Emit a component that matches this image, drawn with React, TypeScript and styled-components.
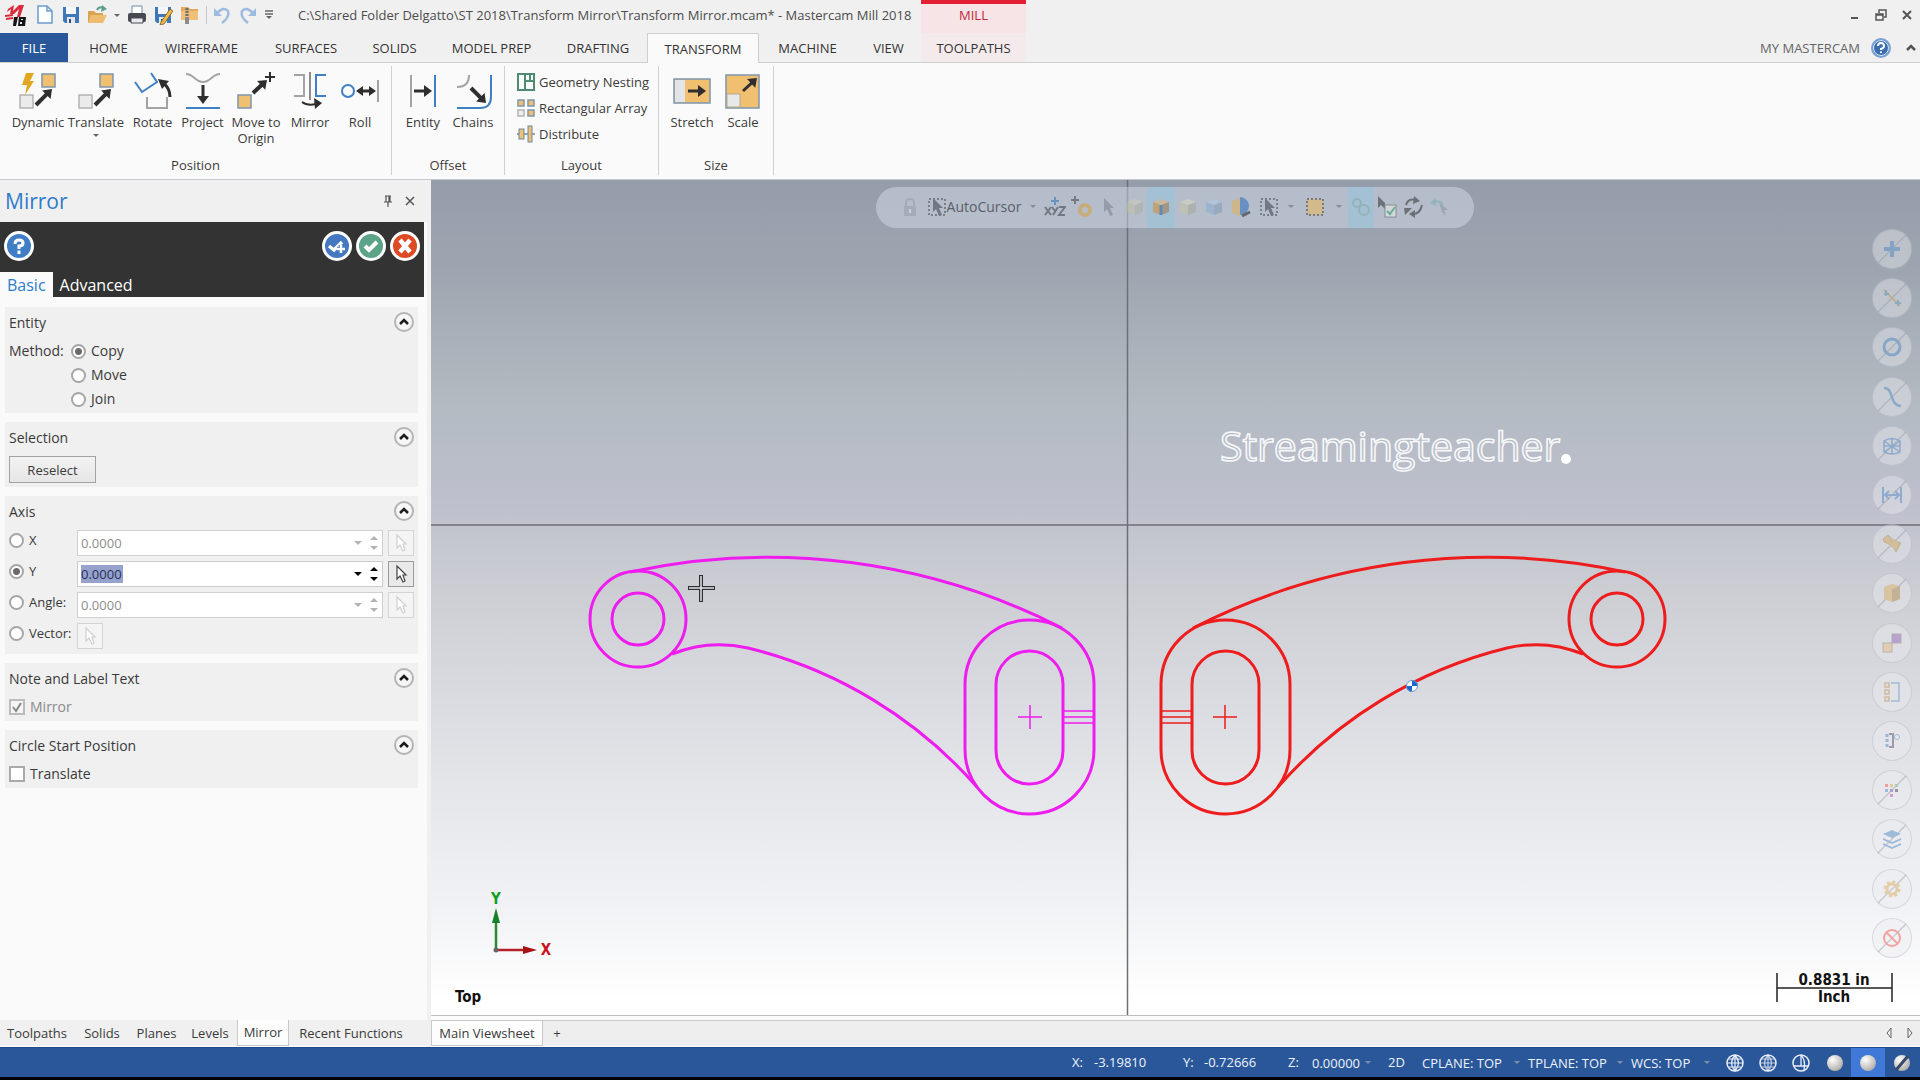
import React, { useState } from "react";
import styled, { createGlobalStyle, css } from "styled-components";

const blue = "#3f7fc4";
const grey = "#a3a3a3";
const orange = "#f0bf70";
const dark = "#2e2e2e";
const statusBlue = "#2a579a";

const GlobalStyle = createGlobalStyle`
  *, *::before, *::after { box-sizing: border-box; }
  body {
    margin: 0;
    background: #000;
    color: #3a3a3a;
    font: 14px/18px "Open Sans", "Noto Sans", sans-serif;
  }
  button, input { font: inherit; color: inherit; margin: 0; }
  svg { display: block; flex: none; }
`;

const Window = styled.div`
  height: 100vh;
  display: flex;
  flex-direction: column;
  background: #f0f0f0;
  border-bottom: 3px solid #000;
  overflow: hidden;
`;

const plainButton = css`
  border: 0;
  padding: 0;
  background: none;
  display: flex;
  align-items: center;
  justify-content: center;
`;

/* ---------- title bar ---------- */
const TitleBar = styled.header`
  height: 33px;
  flex: none;
  display: flex;
  align-items: flex-start;
`;
const QuickButton = styled.button<{ $w: number }>`
  ${plainButton}
  width: ${(p) => p.$w}px;
  height: 30px;
`;
const QuickDivider = styled.span`
  width: 1px;
  height: 18px;
  margin: 6px 2px 0 4px;
  background: #c8c8c8;
`;
const WindowTitle = styled.h1`
  margin: 0;
  width: 645px;
  padding-left: 22px;
  font-size: 13px;
  font-weight: 400;
  line-height: 30px;
  color: #4c4c4c;
  white-space: nowrap;
`;
const MillLabel = styled.div`
  width: 105px;
  height: 33px;
  border-top: 4px solid #e21f35;
  background: #f6e4e7;
  color: #c0293b;
  font-size: 13px;
  line-height: 22px;
  text-align: center;
`;
const WindowButtons = styled.div`
  margin-left: auto;
  display: flex;
`;

/* ---------- tabs ---------- */
const TabBar = styled.nav`
  height: 30px;
  flex: none;
  display: flex;
  border-bottom: 1px solid #cfcfcf;
`;
const Tab = styled.button<{ $w: number; $kind?: "file" | "active" | "mill" }>`
  ${plainButton}
  width: ${(p) => p.$w}px;
  height: 30px;
  font-size: 13px;
  color: #333;
  ${(p) => p.$kind === "file" && css`background: ${statusBlue}; color: #fff; margin-right: 3px; height: 29px;`}
  ${(p) => p.$kind === "active" && css`background: #fafafa; border: 1px solid #cfcfcf; border-bottom: 0;`}
  ${(p) => p.$kind === "mill" && css`background: #f4eaec; height: 29px;`}
`;
const TabBarEnd = styled.div`
  margin-left: auto;
  display: flex;
  align-items: center;
  font-size: 13px;
  color: #666;
`;

/* ---------- ribbon ---------- */
const Ribbon = styled.section`
  height: 117px;
  flex: none;
  display: flex;
  background: #fafafa;
  border-bottom: 1px solid #c4c7cb;
`;
const Group = styled.div<{ $w: number }>`
  width: ${(p) => p.$w}px;
  margin: 3px 0 4px;
  padding: 4px 0 1px;
  border-right: 1px solid #d0d0d0;
  display: flex;
  flex-direction: column;
  justify-content: space-between;
`;
const GroupBody = styled.div<{ $pad: number }>`
  display: flex;
  padding-left: ${(p) => p.$pad}px;
`;
const GroupName = styled.div`
  text-align: center;
  font-size: 13px;
`;
const RibbonButton = styled.button<{ $w: number }>`
  ${plainButton}
  width: ${(p) => p.$w}px;
  flex-direction: column;
  justify-content: flex-start;
  font-size: 13px;
  line-height: 16px;
  gap: 4px;
`;
const LayoutList = styled.div`
  display: flex;
  flex-direction: column;
`;
const LayoutButton = styled.button`
  ${plainButton}
  justify-content: flex-start;
  height: 26px;
  padding-bottom: 3px;
  gap: 4px;
  font-size: 13px;
  white-space: nowrap;
`;

/* ---------- work area ---------- */
const Work = styled.main`
  flex: 1;
  min-height: 0;
  display: flex;
`;
const SideColumn = styled.aside`
  width: 431px;
  flex: none;
  display: flex;
  flex-direction: column;
  border-right: 4px solid #f0f0f0;
  background: #fafafa;
`;
const PanelTitle = styled.div`
  height: 42px;
  flex: none;
  padding: 0 6px 0 5px;
  display: flex;
  align-items: center;
  background: #f0f0f0;
`;
const PanelName = styled.h2`
  margin: 0 auto 0 0;
  font-size: 21px;
  font-weight: 400;
  line-height: 38px;
  color: #2f7bcb;
`;
const TitleButton = styled.button`
  ${plainButton}
  width: 22px;
  height: 22px;
`;
const PanelHead = styled.div`
  width: 424px;
  height: 75px;
  flex: none;
  background: #333;
  display: flex;
  flex-direction: column;
  justify-content: space-between;
`;
const HeadActions = styled.div`
  display: flex;
  gap: 4px;
  padding: 9px 4px 0;
`;
const RoundButton = styled.button<{ $bg: string; $push?: boolean }>`
  ${plainButton}
  width: 30px;
  height: 30px;
  border: 3px solid #fff;
  border-radius: 50%;
  background: ${(p) => p.$bg};
  color: #fff;
  ${(p) => p.$push && css`margin-right: auto;`}
`;
const HeadTabs = styled.div`
  display: flex;
`;
const HeadTab = styled.button<{ $active?: boolean }>`
  ${plainButton}
  height: 25px;
  padding: 0 7px;
  font-size: 16px;
  color: ${(p) => (p.$active ? "#2f7bcb" : "#fff")};
  background: ${(p) => (p.$active ? "#fafafa" : "none")};
`;
const Sections = styled.div`
  flex: 1;
  padding: 10px 9px 0 5px;
  display: flex;
  flex-direction: column;
  gap: 9px;
`;
const SectionBox = styled.section`
  background: #f0f0f0;
  padding: 0 4px 2px;
  display: flex;
  flex-direction: column;
`;
const SectionHead = styled.div`
  height: 29px;
  margin-bottom: 3px;
  display: flex;
  align-items: center;
  justify-content: space-between;
`;
const SectionName = styled.h3`
  margin: 0;
  padding-top: 2px;
  font-size: 14px;
  font-weight: 400;
`;
const Collapse = styled.button`
  ${plainButton}
  width: 20px;
  height: 20px;
  border: 2px solid #b4b4b4;
  border-radius: 50%;
  background: #f6f6f6;
`;
const MethodRow = styled.div`
  display: flex;
`;
const MethodName = styled.span`
  width: 62px;
  line-height: 24px;
`;
const Option = styled.label<{ $muted?: boolean }>`
  display: flex;
  align-items: center;
  gap: 5px;
  height: 24px;
  color: ${(p) => (p.$muted ? "#8a8a8a" : "inherit")};
`;
const Radio = styled.input.attrs({ type: "radio" })`
  appearance: none;
  width: 15px;
  height: 15px;
  flex: none;
  border: 2px solid #a6a6a6;
  border-radius: 50%;
  background: #fff;
  &:checked { background: radial-gradient(circle, #6a6a6a 0 3px, #fff 4px); }
`;
const CheckBox = styled.span`
  width: 16px;
  height: 16px;
  display: grid;
  > * { grid-area: 1 / 1; }
  > svg { display: none; pointer-events: none; }
  > input:checked + svg { display: block; }
`;
const CheckInput = styled.input.attrs({ type: "checkbox" })`
  appearance: none;
  width: 16px;
  height: 16px;
  border: 2px solid #aaa;
  background: #fff;
  &:disabled { background: #f4f4f4; border-color: #bbb; }
`;
const Reselect = styled.button`
  ${plainButton}
  width: 87px;
  height: 27px;
  margin: 2px 0;
  border: 1px solid #a3a3a3;
  background: linear-gradient(#f2f2f2, #e6e6e6);
  font-size: 13px;
`;
const AxisRows = styled.div`
  padding: 2px 0 3px;
  display: flex;
  flex-direction: column;
  gap: 5px;
`;
const AxisRow = styled.div`
  display: flex;
  height: 26px;
  gap: 5px;
`;
const AxisOption = styled(Option)`
  width: 63px;
  height: 20px;
  font-size: 13px;
`;
const Combo = styled.div<{ $off: boolean }>`
  flex: 1;
  display: flex;
  align-items: center;
  border: 1px solid ${(p) => (p.$off ? "#d2d0ce" : "#cccccc")};
  background: #fff;
  color: ${(p) => (p.$off ? "#b4b4b4" : "#000")};
`;
const Value = styled.input<{ $off: boolean }>`
  flex: 1;
  min-width: 0;
  border: 0;
  padding: 0 3px;
  background: none;
  color: ${(p) => (p.$off ? "#8d8d8d" : "#27315e")};
  ${(p) => !p.$off && css`
    background: linear-gradient(#96a2cb, #96a2cb) 3px 50% / 42px 19px no-repeat;
  `}
  outline: 0;
  font-size: 13px;
`;
const ComboButton = styled.button`
  ${plainButton}
  width: 16px;
  height: 22px;
`;
const PickButton = styled.button<{ $off: boolean }>`
  ${plainButton}
  width: 26px;
  height: 26px;
  border: 1px solid ${(p) => (p.$off ? "#d4d4d4" : "#9b9b9b")};
  color: ${(p) => (p.$off ? "#cfcfcf" : "#444")};
  background: ${(p) => (p.$off ? "#f4f4f4" : "#e9e9e9")};
`;
const SheetTabs = styled.nav`
  height: 27px;
  flex: none;
  display: flex;
  background: #f0f0f0;
  border-bottom: 1px solid #fff;
`;
const SheetTab = styled.button<{ $w: number; $active?: boolean }>`
  ${plainButton}
  width: ${(p) => p.$w}px;
  padding-bottom: 1px;
  font-size: 13px;
  white-space: nowrap;
  ${(p) => p.$active && css`background: #fdfdfd; border: solid #c8c8c8; border-width: 0 1px 1px;`}
`;
const ViewColumn = styled.div`
  flex: 1;
  min-width: 0;
  display: flex;
  flex-direction: column;
`;
const Viewport = styled.div`
  flex: 1;
  min-height: 0;
  position: relative;
  background: linear-gradient(#959dab 0%, #9ca5af 10%, #b3bac2 27%, #bfc1ce 40%, #c5c8cf 44%, #d2d3d8 54%, #dadbe1 62%, #e6e7ea 74%, #f0f1f4 86%, #fff 98%);
`;
const Drawing = styled.svg`
  width: 100%;
  height: 100%;
`;
const ViewSheets = styled.nav`
  height: 32px;
  flex: none;
  padding-top: 5px;
  display: flex;
  align-items: stretch;
  border-top: 1px solid #bdbdbd;
  border-bottom: 1px solid #fff;
  background: linear-gradient(#fbfbfb 4px, #c8c8c8 4px 5px, #eeeeee 5px);
`;
const SheetArrows = styled.div`
  margin-left: auto;
  display: flex;
`;
const Cursorbar = styled.div`
  position: absolute;
  top: 7px;
  left: 445px;
  height: 41px;
  padding: 0 21px;
  display: flex;
  border-radius: 21px;
  background: rgba(225, 231, 245, 0.42);
`;
const CursorTool = styled.button<{ $w: number; $on?: boolean }>`
  ${plainButton}
  width: ${(p) => p.$w}px;
  padding-bottom: 2px;
  font-size: 14px;
  color: #5b6068;
  white-space: nowrap;
  background: ${(p) => (p.$on ? "rgba(150, 195, 220, 0.55)" : "none")};
  > svg { opacity: 0.55; }
`;
const Filters = styled.div`
  position: absolute;
  top: 49px;
  right: 8px;
  bottom: 57px;
  display: flex;
  flex-direction: column;
  justify-content: space-between;
`;
const FilterButton = styled.button`
  ${plainButton}
  width: 40px;
  height: 40px;
  border: 1px solid rgba(130, 140, 155, 0.24);
  border-radius: 50%;
  background: rgba(235, 237, 240, 0.42);
  > svg { opacity: 0.42; }
`;

/* ---------- status bar ---------- */
const StatusBar = styled.footer`
  height: 30px;
  flex: none;
  display: flex;
  justify-content: flex-end;
  align-items: stretch;
  background: ${statusBlue};
  border-top: 1px solid #1f4a89;
  color: #eef3fa;
  padding-right: 1px;
`;
const StatusText = styled.span<{ $w: number }>`
  width: ${(p) => p.$w}px;
  font-size: 13px;
  line-height: 28px;
  white-space: nowrap;
`;
const StatusButton = styled.button<{ $w: number; $on?: boolean }>`
  ${plainButton}
  width: ${(p) => p.$w}px;
  font-size: 13px;
  justify-content: ${(p) => (p.$w > 40 ? "space-between" : "center")};
  padding-right: ${(p) => (p.$w > 40 ? 8 : 0)}px;
  white-space: nowrap;
  background: ${(p) => (p.$on ? "#3f78d6" : "none")};
`;

/* ---------- icons ---------- */
type Kids = { children: React.ReactNode };
const I = ({ s = 20, b = s, children }: { s?: number; b?: number } & Kids) => (
  <svg width={s} height={s} viewBox={`0 0 ${b} ${b}`} fill="none" aria-hidden="true">{children}</svg>
);

const Caret = ({ c = "#666", s = 8 }: { c?: string; s?: number }) => (
  <svg width={s} height={s / 2} viewBox="0 0 8 4" aria-hidden="true">
    <path d="M0 0H8L4 4Z" fill={c} />
  </svg>
);

const Arrow = ({ x1, y1, x2, y2, w = 4 }: { x1: number; y1: number; x2: number; y2: number; w?: number }) => {
  const len = Math.hypot(x2 - x1, y2 - y1);
  const ux = (x2 - x1) / len;
  const uy = (y2 - y1) / len;
  const bx = x2 - ux * 8;
  const by = y2 - uy * 8;
  return (
    <>
      <path d={`M${x1} ${y1}L${bx + ux} ${by + uy}`} stroke={dark} strokeWidth={w} />
      <path d={`M${x2} ${y2}L${bx - uy * 6} ${by + ux * 6}L${bx + uy * 6} ${by - ux * 6}Z`} fill={dark} />
    </>
  );
};
const Box = ({ x, y, fill = orange, stroke = "#7d96ad", s = 13 }: { x: number; y: number; fill?: string; stroke?: string; s?: number }) => (
  <rect x={x} y={y} width={s} height={s} fill={fill} stroke={stroke} strokeWidth="1.5" />
);
const Ghost = ({ x, y }: { x: number; y: number }) => <Box x={x} y={y} fill="#ebebeb" stroke="#b4b4b4" />;

const DynamicIcon = () => (
  <I s={40}>
    <path d="M8 3H16L12 11H16L7 25L9 15H4Z" fill="#e2a722" />
    <Box x={24} y={4} /><Ghost x={2} y={25} />
    <Arrow x1={18} y1={35} x2={34} y2={19} />
  </I>
);
const TranslateIcon = () => (
  <I s={40}><Box x={24} y={4} /><Ghost x={3} y={25} /><Arrow x1={19} y1={35} x2={35} y2={19} /></I>
);
const RotateIcon = () => (
  <I s={40}>
    <path d="M2 12L9 22L24 12L18 3" stroke={blue} strokeWidth="2" />
    <path d="M14 27V38H34V27" stroke={grey} strokeWidth="2" />
    <path d="M37 27Q37 18 30 13" stroke={dark} strokeWidth="3" />
    <path d="M25 9L36 11L29 19Z" fill={dark} />
  </I>
);
const ProjectIcon = () => (
  <I s={40}>
    <path d="M3 4C11 4 12 12 20 12S29 4 37 4" stroke={grey} strokeWidth="2" />
    <Arrow x1={20} y1={15} x2={20} y2={34} w={3} />
    <path d="M3 38H37" stroke={blue} strokeWidth="2" />
  </I>
);
const OriginIcon = () => (
  <I s={40}>
    <Box x={2} y={25} /><Arrow x1={17} y1={23} x2={31} y2={10} />
    <path d="M34 2V12M29 7H39" stroke={dark} strokeWidth="2" />
  </I>
);
const MirrorIcon = () => (
  <I s={40}>
    <path d="M4 5H14V26H4" stroke={grey} strokeWidth="2" />
    <path d="M20 2V30" stroke="#8c8c8c" strokeWidth="2" />
    <path d="M36 5H26V26H36" stroke={blue} strokeWidth="2" />
    <path d="M12 32Q17 36 26 34" stroke={dark} strokeWidth="2" />
    <path d="M24 28L32 33L25 39Z" fill={dark} />
  </I>
);
const RollIcon = () => (
  <I s={40}>
    <circle cx="8" cy="21" r="6" stroke={blue} strokeWidth="2" />
    <path d="M20 21H32" stroke={dark} strokeWidth="3" />
    <path d="M16 21L23 16V26ZM36 21L29 16V26Z" fill={dark} />
    <path d="M38 10V32" stroke={grey} strokeWidth="2" />
  </I>
);
const EntityIcon = () => (
  <I s={40}>
    <path d="M8 5V37" stroke={grey} strokeWidth="2" />
    <Arrow x1={11} y1={21} x2={29} y2={21} w={3} />
    <path d="M32 5V37" stroke={blue} strokeWidth="2" />
  </I>
);
const ChainsIcon = () => (
  <I s={40}>
    <path d="M4 17Q16 17 16 5" stroke={grey} strokeWidth="2" />
    <Arrow x1={18} y1={18} x2={33} y2={33} />
    <path d="M4 38H27Q38 38 38 27V5" stroke={blue} strokeWidth="2" />
  </I>
);
const StretchIcon = () => (
  <I s={40}>
    <rect x="2" y="9" width="36" height="24" fill={orange} stroke="#7d96ad" strokeWidth="1.5" />
    <path d="M3 10H13V32H3Z" fill="#e2e4e8" />
    <Arrow x1={16} y1={21} x2={34} y2={21} w={3} />
  </I>
);
const ScaleIcon = () => (
  <I s={40}>
    <rect x="3" y="5" width="33" height="33" fill={orange} stroke="#7d96ad" strokeWidth="1.5" />
    <path d="M4 24H17V37H4Z" fill="#e6e8ea" stroke="#b8a98c" />
    <Arrow x1={20} y1={21} x2={34} y2={8} w={3} />
  </I>
);
const NestingIcon = () => (
  <I s={18}><path d="M1 1H17V17H1ZM8 1V17M8 8H17M13 1V8" stroke="#4d8b72" strokeWidth="2" /></I>
);
const ArrayIcon = () => (
  <I s={18}><Box x={1} y={1} s={6} /><Box x={11} y={1} s={6} /><Box x={1} y={11} s={6} fill="#eee" stroke="#b4b4b4" /><Box x={11} y={11} s={6} /></I>
);
const DistributeIcon = () => (
  <I s={18}>
    <path d="M0 9H18" stroke="#6b88a5" strokeWidth="1.5" />
    <rect x="2" y="4" width="5" height="10" fill={orange} stroke="#6b88a5" />
    <rect x="11" y="1" width="4" height="16" fill={orange} stroke="#6b88a5" />
  </I>
);
const LogoIcon = () => (
  <I s={22}>
    <path d="M3 5L9 1L8 7L14 1L19 1L15 13L12 13L14 5L9 10L5 10L6 5L2 8Z" fill="#d92b3c" />
    <path d="M0 12L8 11M1 15L8 14" stroke="#d92b3c" strokeWidth="2" />
    <path d="M9 13H13L11 22H8ZM14 13H21L20 22H13ZM16 15V16H18V15ZM15 18V20H17V18Z" fill="#141414" fillRule="evenodd" />
  </I>
);
const PageIcon = () => (
  <I s={20}><path d="M3 1H12L17 6V18H3Z" fill="#fff" stroke="#6b9bd1" strokeWidth="1.5" /><path d="M12 1V6H17" stroke="#6b9bd1" strokeWidth="1.5" /></I>
);
const Floppy = ({ pen = false }: { pen?: boolean }) => (
  <I s={20}>
    <path d="M2 2H18V18H4L2 16Z" fill="#3f78b8" />
    <path d="M5 2H15V9H5Z" fill="#f5f7fa" /><path d="M6 12H14V18H6Z" fill="#dfe6ee" /><path d="M8 14H10V18H8Z" fill="#35506e" />
    {pen && <><path d="M8 17L17 4L20 6L11 19L7 20Z" fill="#f0b846" stroke="#7b5c1f" strokeWidth="0.8" /></>}
  </I>
);
const OpenIcon = () => (
  <I s={20}>
    <path d="M1 6H7L9 8H16V18H1Z" fill="#d9a354" /><path d="M4 10H20L16 18H1Z" fill="#eebd72" />
    <path d="M10 5Q12 1 17 3" stroke="#5fa08a" strokeWidth="2" /><path d="M15 0L20 4L14 7Z" fill="#5fa08a" />
  </I>
);
const PrintIcon = () => (
  <I s={20}>
    <path d="M5 1H15V9H5Z" fill="#fff" stroke="#6c8caf" /><rect x="1" y="8" width="18" height="9" rx="2" fill="#474a50" />
    <path d="M4 13H16V18H4Z" fill="#e8eaed" stroke="#474a50" />
  </I>
);
const ZipIcon = () => (
  <I s={20}>
    <path d="M2 2H9L11 4H19V15H2Z" fill="#e2aa5e" /><path d="M2 6H19V15H2Z" fill="#f0bf78" />
    <path d="M8 3V19" stroke="#6d6d6d" strokeWidth="3" strokeDasharray="2 1" /><rect x="6" y="12" width="4" height="7" fill="#8c8c8c" />
  </I>
);
const UndoIcon = ({ flip = false }: { flip?: boolean }) => (
  <I s={20}>
    <g transform={flip ? "translate(20 0) scale(-1 1)" : undefined}>
      <path d="M5 8Q12 1 16 6Q18 12 10 18" stroke="#9dbbdf" strokeWidth="2.5" /><path d="M2 3V11H10Z" fill="#9dbbdf" />
    </g>
  </I>
);
const MoreIcon = () => <I s={10}><path d="M1 1H9M1 4H9" stroke="#666" strokeWidth="1.3" /><path d="M2 6H8L5 9Z" fill="#666" /></I>;
const HelpIcon = () => (
  <I s={20}>
    <circle cx="10" cy="10" r="9" fill="#3b6fb0" stroke="#7ba1d2" strokeWidth="2" /><circle cx="10" cy="10" r="7.5" stroke="#dce8f6" />
    <path d="M7 8Q7 5 10 5T13 8Q13 10 10 11V12M10 13.500V15" stroke="#fff" strokeWidth="2" />
  </I>
);
const QuestionIcon = () => <I s={20}><path d="M6 8Q6 4 10 4T14 7Q14 10 10 10V13M10 14.500V18" stroke="#fff" strokeWidth="3" /></I>;
const CheckIcon = ({ plus = false }: { plus?: boolean }) => (
  <I s={20}>
    <path d={plus ? "M2 10L7 14L15 6" : "M4 10L8 14L16 6"} stroke="#fff" strokeWidth={plus ? 3.5 : 4} />
    {plus && <path d="M14 9V17M10 13H18" stroke="#4478c0" strokeWidth="4.500" />}
    {plus && <path d="M14 9V17M10 13H18" stroke="#fff" strokeWidth="2.500" />}
  </I>
);
const CrossIcon = () => <I s={20}><path d="M5 4L15 16M15 4L5 16" stroke="#fff" strokeWidth="4.500" /></I>;
const PointerIcon = () => (
  <I s={20}><path d="M6 2V15L9 12L12 18L14 17L12 11H15Z" fill="#fff" stroke="currentColor" strokeWidth="1.2" /></I>
);
const ChevronUp = ({ c = "#1c1c1c" }: { c?: string }) => <I s={12}><path d="M2 8L6 4L10 8" stroke={c} strokeWidth="2.500" /></I>;

const Cube = ({ c, line = "#7d8894", faint = false, edge = false }: { c: string; line?: string; faint?: boolean; edge?: boolean }) => (
  <I s={20}>
    <g opacity={faint ? 0.65 : 1}>
      <path d="M2 5L10 2L18 5V15L10 18L2 15Z" fill={c} /><path d="M10 8L18 5V15L10 18Z" fill={line} opacity="0.45" />
      <path d="M2 5L10 2L18 5L10 8Z" fill="#fff" opacity="0.35" />
    </g>
    {edge && <path d="M10 8V18" stroke="#2a5f9e" strokeWidth="3" />}
  </I>
);
const SolidPointer = ({ c = "#3c4048" }: { c?: string }) => <path d="M6 1V15L9 12L12 19L15 18L12 11H16Z" fill={c} />;
const SelectIcon = () => (
  <I s={20}><rect x="2" y="2" width="16" height="16" stroke="#4a4f57" strokeWidth="2" strokeDasharray="2 2" /><SolidPointer /></I>
);

const slash = <path d="M6 34L34 6" stroke="#8b939c" strokeWidth="1.200" />;
const filterIcons: { name: string; art: React.ReactNode }[] = [
  { name: "Points", art: <>{slash}<path d="M20 12V28M12 20H28" stroke="#3678bd" strokeWidth="4" /></> },
  { name: "Lines", art: <>{slash}<path d="M12 12L28 28" stroke="#c2923c" strokeWidth="2" /><path d="M12 16H17M14 12V18M23 25H29M26 22V28" stroke="#3f8aa5" strokeWidth="2" /></> },
  { name: "Arcs", art: <>{slash}<circle cx="20" cy="20" r="8" stroke="#3678bd" strokeWidth="3" /></> },
  { name: "Splines", art: <>{slash}<path d="M12 11C22 10 17 29 29 29" stroke="#3678bd" strokeWidth="2.500" /></> },
  { name: "Surface curves", art: <>{slash}<path d="M12 15Q20 10 28 15V26Q20 30 12 26ZM12 15L28 26M28 15L12 26M20 12V28M12 20H28" stroke="#3678bd" strokeWidth="1.500" /></> },
  { name: "Drafting", art: <>{slash}<path d="M11 12V28M29 12V28M12 20H28M17 16L13 20L17 24M23 16L27 20L23 24" stroke="#3678bd" strokeWidth="2" /></> },
  { name: "Surfaces", art: <>{slash}<path d="M11 15L16 11Q21 17 29 19L24 28Q20 20 12 18Z" fill="#d79f3a" stroke="#a5854d" /><path d="M16 11L20 19M24 28L27 19" stroke="#a5854d" /></> },
  { name: "Solids", art: <>{slash}<path d="M12 14L20 11L28 13V26L20 29L12 26Z" fill="#d9a64c" /><path d="M20 16L28 13V26L20 29Z" fill="#a47a32" /></> },
  { name: "Result and group", art: <><rect x="20" y="11" width="9" height="9" fill="#8a4fb5" stroke="#77717f" /><rect x="11" y="20" width="9" height="9" fill="#ecb76c" stroke="#7d766b" /></> },
  { name: "Group list", art: <><path d="M13 11H17V15H13ZM13 18H17V22H13ZM13 25H17V29H13Z" stroke="#b8873c" strokeWidth="1.500" /><path d="M19 11H27V29H19" stroke="#4b86c5" strokeWidth="1.500" /></> },
  { name: "Result list", art: <><path d="M15 13V27" stroke="#3678bd" strokeWidth="3" strokeDasharray="3 2" /><path d="M17 13H21V26H17" stroke="#3a3650" strokeWidth="2" /><circle cx="25" cy="16" r="2.500" stroke="#4b86c5" /></> },
  { name: "Color", art: <>{slash}<path d="M13 14H16V17H13Z" fill="#e0463c" /><path d="M18 14H21V17H18Z" fill="#e39a31" /><path d="M23 14H26V17H23Z" fill="#4caf6e" /><path d="M13 19H16V22H13Z" fill="#377ac9" /><path d="M18 19H21V22H18Z" fill="#4f42b5" /><path d="M23 19H26V22H23Z" fill="#222" /><path d="M18 24H21V27H18Z" fill="#d127a5" /></> },
  { name: "Level", art: <>{slash}<path d="M11 15L20 11L29 15L20 19ZM11 19L20 23L29 19V21L20 25L11 21ZM11 24L20 28L29 24V26L20 30L11 26Z" fill="#3678bd" /></> },
  { name: "Other", art: <>{slash}<circle cx="20" cy="20" r="5" stroke="#d6a244" strokeWidth="3" /><circle cx="20" cy="20" r="7" stroke="#d6a244" strokeWidth="3" strokeDasharray="3 2.500" /></> },
  { name: "Clear", art: <>{slash}<circle cx="20" cy="20" r="8" stroke="#f03a2e" strokeWidth="2" /><path d="M14 14L26 26" stroke="#f03a2e" strokeWidth="2" /></> },
];

/* ---------- sections of the window ---------- */
const Header = () => (
  <TitleBar>
    <QuickButton $w={31} aria-label="Mastercam"><LogoIcon /></QuickButton>
    <QuickButton $w={27} aria-label="New"><PageIcon /></QuickButton>
    <QuickButton $w={26} aria-label="Save"><Floppy /></QuickButton>
    <QuickButton $w={26} aria-label="Open"><OpenIcon /></QuickButton>
    <QuickButton $w={14} aria-label="Recent files"><Caret s={6} /></QuickButton>
    <QuickButton $w={26} aria-label="Print"><PrintIcon /></QuickButton>
    <QuickButton $w={26} aria-label="Save as"><Floppy pen /></QuickButton>
    <QuickButton $w={26} aria-label="Zip2Go"><ZipIcon /></QuickButton>
    <QuickDivider />
    <QuickButton $w={26} aria-label="Undo"><UndoIcon /></QuickButton>
    <QuickButton $w={26} aria-label="Redo"><UndoIcon flip /></QuickButton>
    <QuickButton $w={15} aria-label="Customize"><MoreIcon /></QuickButton>
    <WindowTitle>C:\Shared Folder Delgatto\ST 2018\Transform Mirror\Transform Mirror.mcam* - Mastercam Mill 2018</WindowTitle>
    <MillLabel>MILL</MillLabel>
    <WindowButtons>
      <QuickButton $w={27} aria-label="Minimize"><I s={12}><path d="M2 9H9" stroke="#555" strokeWidth="2" /></I></QuickButton>
      <QuickButton $w={26} aria-label="Restore"><I s={12}><path d="M1 5H8V11H1ZM4 4V1H11V8H9M1 6H8" stroke="#555" strokeWidth="1.500" /></I></QuickButton>
      <QuickButton $w={26} aria-label="Close"><I s={12}><path d="M2 2L10 10M10 2L2 10" stroke="#555" strokeWidth="2" /></I></QuickButton>
    </WindowButtons>
  </TitleBar>
);

const tabs: [string, number, ("file" | "active" | "mill")?][] = [
  ["FILE", 68, "file"], ["HOME", 75], ["WIREFRAME", 111], ["SURFACES", 98], ["SOLIDS", 79], ["MODEL PREP", 115],
  ["DRAFTING", 98], ["TRANSFORM", 112, "active"], ["MACHINE", 97], ["VIEW", 65], ["TOOLPATHS", 105, "mill"],
];

const RibbonTabs = () => (
  <TabBar>
    {tabs.map(([t, w, k]) => <Tab key={t} $w={w} $kind={k}>{t}</Tab>)}
    <TabBarEnd>
      MY MASTERCAM
      <QuickButton $w={42} aria-label="Help"><HelpIcon /></QuickButton>
      <QuickButton $w={18} aria-label="Collapse ribbon"><ChevronUp c="#555" /></QuickButton>
    </TabBarEnd>
  </TabBar>
);

const RibbonArea = () => (
  <Ribbon>
    <Group $w={392}>
      <GroupBody $pad={9}>
        <RibbonButton $w={58}><DynamicIcon />Dynamic</RibbonButton>
        <RibbonButton $w={58}><TranslateIcon />Translate<Caret s={6} /></RibbonButton>
        <RibbonButton $w={55}><RotateIcon />Rotate</RibbonButton>
        <RibbonButton $w={45}><ProjectIcon />Project</RibbonButton>
        <RibbonButton $w={62}><OriginIcon />Move to Origin</RibbonButton>
        <RibbonButton $w={46}><MirrorIcon />Mirror</RibbonButton>
        <RibbonButton $w={54}><RollIcon />Roll</RibbonButton>
      </GroupBody>
      <GroupName>Position</GroupName>
    </Group>
    <Group $w={113}>
      <GroupBody $pad={4}>
        <RibbonButton $w={54}><EntityIcon />Entity</RibbonButton>
        <RibbonButton $w={46}><ChainsIcon />Chains</RibbonButton>
      </GroupBody>
      <GroupName>Offset</GroupName>
    </Group>
    <Group $w={154}>
      <GroupBody $pad={12}>
        <LayoutList>
          <LayoutButton><NestingIcon />Geometry Nesting</LayoutButton>
          <LayoutButton><ArrayIcon />Rectangular Array</LayoutButton>
          <LayoutButton><DistributeIcon />Distribute</LayoutButton>
        </LayoutList>
      </GroupBody>
      <GroupName>Layout</GroupName>
    </Group>
    <Group $w={115}>
      <GroupBody $pad={6}>
        <RibbonButton $w={54}><StretchIcon />Stretch</RibbonButton>
        <RibbonButton $w={48}><ScaleIcon />Scale</RibbonButton>
      </GroupBody>
      <GroupName>Size</GroupName>
    </Group>
  </Ribbon>
);

const Section = ({ title, children }: { title: string } & Kids) => (
  <SectionBox>
    <SectionHead>
      <SectionName>{title}</SectionName>
      <Collapse aria-label={`Collapse ${title}`}><ChevronUp /></Collapse>
    </SectionHead>
    {children}
  </SectionBox>
);

const AxisField = ({ name, active, onPick }: { name: string; active: boolean; onPick: () => void }) => (
  <AxisRow>
    <AxisOption><Radio name="axis" checked={active} onChange={onPick} />{name}</AxisOption>
    {name !== "Vector:" && (
      <Combo $off={!active}>
        <Value $off={!active} aria-label={`${name} value`} defaultValue="0.0000" disabled={!active} />
        <ComboButton aria-label="Previous values"><Caret c="currentColor" /></ComboButton>
        <ComboButton aria-label="Step value">
          <svg width="8" height="16" viewBox="0 0 8 16" aria-hidden="true"><path d="M0 5L4 1L8 5ZM0 11H8L4 15Z" fill="currentColor" /></svg>
        </ComboButton>
      </Combo>
    )}
    <PickButton $off={!active} aria-label={`Select ${name}`}><PointerIcon /></PickButton>
  </AxisRow>
);

const MirrorPanel = () => {
  const [method, setMethod] = useState("Copy");
  const [axis, setAxis] = useState("Y");
  return (
    <>
      <PanelTitle>
        <PanelName>Mirror</PanelName>
        <TitleButton aria-label="Pin"><I s={12}><path d="M3 1H9M4 1V7M8 1V7M7 1V7M2 7H10M6 7V12" stroke="#555" strokeWidth="1.200" /></I></TitleButton>
        <TitleButton aria-label="Close panel"><I s={12}><path d="M2 2L10 10M10 2L2 10" stroke="#555" strokeWidth="1.500" /></I></TitleButton>
      </PanelTitle>
      <PanelHead>
        <HeadActions>
          <RoundButton $bg="#3f7dc6" $push aria-label="Help"><QuestionIcon /></RoundButton>
          <RoundButton $bg="#4478c0" aria-label="OK and create new"><CheckIcon plus /></RoundButton>
          <RoundButton $bg="#5ba487" aria-label="OK"><CheckIcon /></RoundButton>
          <RoundButton $bg="#dd4a24" aria-label="Cancel"><CrossIcon /></RoundButton>
        </HeadActions>
        <HeadTabs>
          <HeadTab $active>Basic</HeadTab>
          <HeadTab>Advanced</HeadTab>
        </HeadTabs>
      </PanelHead>
      <Sections>
        <Section title="Entity">
          <MethodRow>
            <MethodName>Method:</MethodName>
            <div>
              {["Copy", "Move", "Join"].map((m) => (
                <Option key={m}><Radio name="method" checked={method === m} onChange={() => setMethod(m)} />{m}</Option>
              ))}
            </div>
          </MethodRow>
        </Section>
        <Section title="Selection"><Reselect>Reselect</Reselect></Section>
        <Section title="Axis">
          <AxisRows>
            {["X", "Y", "Angle:", "Vector:"].map((a) => (
              <AxisField key={a} name={a} active={axis === a} onPick={() => setAxis(a)} />
            ))}
          </AxisRows>
        </Section>
        <Section title="Note and Label Text">
          <Option $muted>
            <CheckBox>
              <CheckInput defaultChecked disabled />
              <I s={16}><path d="M4 8L7 12L12 4" stroke="#888" strokeWidth="2" /></I>
            </CheckBox>
            Mirror
          </Option>
        </Section>
        <Section title="Circle Start Position">
          <Option>
            <CheckBox>
              <CheckInput />
              <I s={16}><path d="M4 8L7 12L12 4" stroke="#444" strokeWidth="2" /></I>
            </CheckBox>
            Translate
          </Option>
        </Section>
      </Sections>
    </>
  );
};

const Part = ({ color }: { color: string }) => (
  <g stroke={color} strokeWidth="3" fill="none">
    <circle cx="638" cy="619" r="48" />
    <circle cx="638" cy="619" r="26" />
    <rect x="965" y="620" width="129" height="194" rx="64.500" />
    <rect x="996" y="651" width="67" height="133" rx="33.500" />
    <path d="M630 572A648 648 0 0 1 1062 628" />
    <path d="M672 654A127 127 0 0 1 748 648A446 446 0 0 1 977 787" />
    <path d="M1030 705V729M1018 717H1042M1063 711H1095M1063 717H1095M1063 723H1095" strokeWidth="1.500" />
  </g>
);

const Canvas = () => (
  <Drawing viewBox="431 180 1489 835" preserveAspectRatio="none" role="img" aria-label="Part geometry, top view">
    <path d="M431 525H1920M1127.500 180V1015" stroke="#6d6f76" strokeWidth="1.500" />
    <Part color="#ee1cee" />
    <g transform="translate(2255 0) scale(-1 1)"><Part color="#ee1c1c" /></g>
    <text x="1220" y="461" fontFamily="Open Sans" fontSize="41" fill="none" stroke="#f6f8fa" strokeWidth="1.600">Streamingteacher</text>
    <circle cx="1566" cy="459" r="5" fill="#fff" />
    <g transform="translate(1412 686)">
      <circle r="6" fill="#fff" /><path d="M0 0V-6A6 6 0 0 1 6 0ZM0 0V6A6 6 0 0 1 -6 0Z" fill="#1b66c9" />
      <circle r="5.500" fill="none" stroke="#5c8fcf" />
    </g>
    <path d="M701 575V602M688 588H715" stroke="#2c2f33" strokeWidth="4" />
    <path d="M701 576V601M689 588H714" stroke="#e2e5e8" strokeWidth="1.500" />
    <path d="M496 950V918" stroke="#2a8a34" strokeWidth="2.500" /><path d="M496 908L500 923H492Z" fill="#16802a" />
    <path d="M496 950H526" stroke="#b52128" strokeWidth="2.500" /><path d="M537 950L523 954V946Z" fill="#a81118" />
    <circle cx="496" cy="950" r="2.500" fill="#666" />
    <g fontFamily="DejaVu Sans Condensed, DejaVu Sans" fontWeight="700" fontSize="15" textAnchor="middle">
      <text x="496" y="904" fill="#0fa01e">Y</text>
      <text x="546" y="955" fill="#c8141b">X</text>
      <text x="468" y="1002" fill="#111">Top</text>
      <text x="1834" y="985" fill="#111">0.8831 in</text>
      <text x="1834" y="1002" fill="#111">Inch</text>
    </g>
    <path d="M1777 973V1002M1892 973V1002M1777 988H1892" stroke="#222" strokeWidth="1.500" />
  </Drawing>
);

const SelectionBar = () => (
  <Cursorbar>
    <CursorTool $w={26} aria-label="Lock"><I s={20}><rect x="4" y="9" width="12" height="10" fill="#9a9fa7" /><path d="M6 9V5Q6 2 10 2T14 5V9" stroke="#9a9fa7" strokeWidth="2" /><path d="M10 12V16" stroke="#dde0e5" strokeWidth="2" /></I></CursorTool>
    <CursorTool $w={102}><SelectIcon />AutoCursor</CursorTool>
    <CursorTool $w={16} aria-label="AutoCursor options"><Caret s={6} /></CursorTool>
    <CursorTool $w={28} aria-label="XYZ">
      <I s={22}><path d="M11 1V9M7 5H15" stroke="#2a70b8" strokeWidth="2" /><path d="M1 11L7 19M7 11L1 19M8 11L11 15M14 11L9 19M15 11H21L15 19H21" stroke="#3c4048" strokeWidth="2" /></I>
    </CursorTool>
    <CursorTool $w={25} aria-label="Settings"><I s={22}><path d="M4 0V8M0 4H8" stroke="#444" strokeWidth="2" /><circle cx="14" cy="14" r="5" stroke="#d79f3a" strokeWidth="4" /></I></CursorTool>
    <CursorTool $w={28} aria-label="Select"><I s={20}><SolidPointer c="#7b818a" /></I></CursorTool>
    <CursorTool $w={25} aria-label="Verify"><Cube c="#c9c28e" faint /></CursorTool>
    <CursorTool $w={28} $on aria-label="Solid body"><Cube c="#d98a2c" line="#5a5a5a" edge /></CursorTool>
    <CursorTool $w={26} aria-label="Solid face"><Cube c="#c6c69e" /></CursorTool>
    <CursorTool $w={26} aria-label="Solid edge"><Cube c="#88acd0" /></CursorTool>
    <CursorTool $w={28} aria-label="Solid from back">
      <I s={22}><path d="M2 5L10 2V20L2 17Z" fill="#e2b158" /><path d="M10 1A9 9 0 0 1 10 19Z" fill="#2b6cc0" /><path d="M12 20L20 16" stroke="#222" strokeWidth="3" /></I>
    </CursorTool>
    <CursorTool $w={27} aria-label="Selection method"><SelectIcon /></CursorTool>
    <CursorTool $w={18} aria-label="Selection method options"><Caret s={6} /></CursorTool>
    <CursorTool $w={30} aria-label="Window"><I s={20}><rect x="2" y="2" width="16" height="16" fill="#ecb85a" stroke="#444" strokeWidth="2" strokeDasharray="2 2" /></I></CursorTool>
    <CursorTool $w={18} aria-label="Window options"><Caret s={6} /></CursorTool>
    <CursorTool $w={26} $on aria-label="Select all"><I s={20}><circle cx="6" cy="6" r="4" stroke="#88a8a4" strokeWidth="2" /><circle cx="13" cy="13" r="5" stroke="#88a8a4" strokeWidth="2" /></I></CursorTool>
    <CursorTool $w={26} aria-label="Validate"><I s={22}><path d="M2 0V12L5 9L9 13V7Z" fill="#333" /><rect x="9" y="9" width="11" height="12" fill="#e8efe8" stroke="#666" /><path d="M11 15L14 18L19 11" stroke="#396" strokeWidth="2" /></I></CursorTool>
    <CursorTool $w={27} aria-label="Invert"><I s={22}><path d="M3 9Q5 2 13 4M8 18Q17 19 19 9" stroke="#333" strokeWidth="2" /><path d="M11 0L17 5L10 8ZM12 14V22L6 18ZM1 12L9 12L2 19Z" fill="#333" /></I></CursorTool>
    <CursorTool $w={26} aria-label="Select last"><I s={20}><path d="M3 6Q8 2 13 7" stroke="#78aeb0" strokeWidth="2" /><path d="M0 6L6 1V9Z" fill="#78aeb0" /><path d="M9 5L18 13L14 13L16 19L12 15Z" fill="#8b919a" /></I></CursorTool>
  </Cursorbar>
);

const Globe = ({ kind }: { kind: number }) => (
  <I s={18}>
    <circle cx="9" cy="9" r="8" stroke="#e8eefa" strokeWidth="1.500" />
    {kind === 2
      ? <path d="M9 1V12M2 12H16M9 1Q14 6 12 16" stroke="#e8eefa" strokeWidth="1.300" />
      : <path d="M9 1V17M1 9H17M9 1Q2 9 9 17M9 1Q16 9 9 17M3 5H15M3 13H15" stroke="#e8eefa" strokeWidth="1.200" opacity={kind ? 0.8 : 1} />}
  </I>
);
const Sphere = ({ half = false }: { half?: boolean }) => (
  <I s={18}>
    <defs><radialGradient id="ball" cx="0.35" cy="0.3" r="0.8"><stop offset="0" stopColor="#fff" /><stop offset="1" stopColor="#a9a6a0" /></radialGradient></defs>
    <circle cx="9" cy="9" r="8" fill="url(#ball)" />
    {half && <path d="M3 16L15 2" stroke="#36496b" strokeWidth="3" />}
  </I>
);

const Status = () => (
  <StatusBar>
    <StatusText $w={22}>X:</StatusText><StatusText $w={89}>-3.19810</StatusText>
    <StatusText $w={21}>Y:</StatusText><StatusText $w={84}>-0.72666</StatusText>
    <StatusText $w={24}>Z:</StatusText>
    <StatusButton $w={67}>0.00000<Caret c="#7f8fa9" s={6} /></StatusButton>
    <StatusText $w={9} />
    <StatusText $w={34}>2D</StatusText>
    <StatusButton $w={106}>CPLANE: TOP<Caret c="#7f8fa9" s={6} /></StatusButton>
    <StatusButton $w={103}>TPLANE: TOP<Caret c="#7f8fa9" s={6} /></StatusButton>
    <StatusButton $w={87}>WCS: TOP<Caret c="#7f8fa9" s={6} /></StatusButton>
    <StatusButton $w={33} aria-label="Wireframe"><Globe kind={0} /></StatusButton>
    <StatusButton $w={33} aria-label="Dimmed wireframe"><Globe kind={1} /></StatusButton>
    <StatusButton $w={34} aria-label="No hidden"><Globe kind={2} /></StatusButton>
    <StatusButton $w={33} aria-label="Outline shaded"><Sphere /></StatusButton>
    <StatusButton $w={34} $on aria-label="Shaded"><Sphere /></StatusButton>
    <StatusButton $w={34} aria-label="Translucency"><Sphere half /></StatusButton>
  </StatusBar>
);

export default function App() {
  return (
    <Window>
      <GlobalStyle />
      <Header />
      <RibbonTabs />
      <RibbonArea />
      <Work>
        <SideColumn>
          <MirrorPanel />
          <SheetTabs>
            <SheetTab $w={74}>Toolpaths</SheetTab>
            <SheetTab $w={56}>Solids</SheetTab>
            <SheetTab $w={53}>Planes</SheetTab>
            <SheetTab $w={54}>Levels</SheetTab>
            <SheetTab $w={52} $active>Mirror</SheetTab>
            <SheetTab $w={124}>Recent Functions</SheetTab>
          </SheetTabs>
        </SideColumn>
        <ViewColumn>
          <Viewport>
            <Canvas />
            <SelectionBar />
            <Filters>
              {filterIcons.map((f) => (
                <FilterButton key={f.name} aria-label={f.name}><I s={40}>{f.art}</I></FilterButton>
              ))}
            </Filters>
          </Viewport>
          <ViewSheets>
            <SheetTab $w={112} $active>Main Viewsheet</SheetTab>
            <SheetTab $w={28}>+</SheetTab>
            <SheetArrows>
              <SheetTab $w={21} aria-label="Previous viewsheet"><I s={10}><path d="M7 0L3 5L7 10Z" stroke="#666" /></I></SheetTab>
              <SheetTab $w={21} aria-label="Next viewsheet"><I s={10}><path d="M3 0L7 5L3 10Z" stroke="#666" /></I></SheetTab>
            </SheetArrows>
          </ViewSheets>
        </ViewColumn>
      </Work>
      <Status />
    </Window>
  );
}
